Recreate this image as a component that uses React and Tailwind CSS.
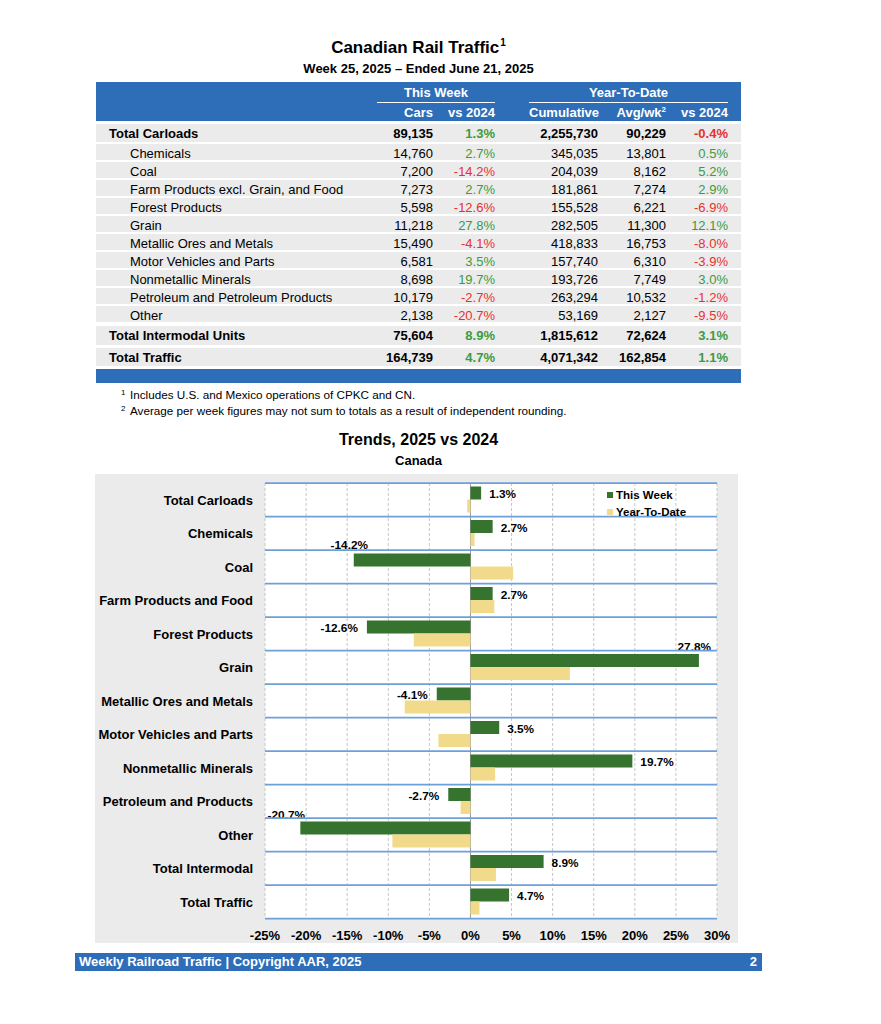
import React from "react";

const COLS = "grid grid-cols-[281px_56px_62px_34px_69px_68px_62px_13px]";

const rows = [
  { label: "Chemicals", cars: "14,760", vs: "2.7%", cum: "345,035", avg: "13,801", ytd: "0.5%" },
  { label: "Coal", cars: "7,200", vs: "-14.2%", cum: "204,039", avg: "8,162", ytd: "5.2%" },
  { label: "Farm Products excl. Grain, and Food", cars: "7,273", vs: "2.7%", cum: "181,861", avg: "7,274", ytd: "2.9%" },
  { label: "Forest Products", cars: "5,598", vs: "-12.6%", cum: "155,528", avg: "6,221", ytd: "-6.9%" },
  { label: "Grain", cars: "11,218", vs: "27.8%", cum: "282,505", avg: "11,300", ytd: "12.1%" },
  { label: "Metallic Ores and Metals", cars: "15,490", vs: "-4.1%", cum: "418,833", avg: "16,753", ytd: "-8.0%" },
  { label: "Motor Vehicles and Parts", cars: "6,581", vs: "3.5%", cum: "157,740", avg: "6,310", ytd: "-3.9%" },
  { label: "Nonmetallic Minerals", cars: "8,698", vs: "19.7%", cum: "193,726", avg: "7,749", ytd: "3.0%" },
  { label: "Petroleum and Petroleum Products", cars: "10,179", vs: "-2.7%", cum: "263,294", avg: "10,532", ytd: "-1.2%" },
  { label: "Other", cars: "2,138", vs: "-20.7%", cum: "53,169", avg: "2,127", ytd: "-9.5%" },
];

function Pct({ v, bold }) {
  const neg = v.startsWith("-");
  return (
    <div className={`text-right ${neg ? "text-[#e8302e]" : "text-[#3d9b3d]"} ${bold ? "font-bold" : ""}`}>{v}</div>
  );
}

function Row({ r, bold, cls }) {
  return (
    <div className={`${COLS} items-center bg-[#ebebeb] text-[13px] text-black ${bold ? "font-bold" : ""} ${cls}`}>
      <div className={bold ? "pl-[13px]" : "pl-[34px]"}>{r.label}</div>
      <div className="text-right">{r.cars}</div>
      <Pct v={r.vs} bold={bold} />
      <div />
      <div className="text-right">{r.cum}</div>
      <div className="text-right">{r.avg}</div>
      <Pct v={r.ytd} bold={bold} />
      <div />
    </div>
  );
}

const L = 170, R = 622, T = 9, RH = 33.5;
const sx = (v) => L + ((v + 25) * (R - L)) / 55;

const cats = [
  { n: "Total Carloads", w: 1.3, y: -0.4 },
  { n: "Chemicals", w: 2.7, y: 0.5 },
  { n: "Coal", w: -14.2, y: 5.2, lx: 273, ly: 71, anchor: "end" },
  { n: "Farm Products and Food", w: 2.7, y: 2.9 },
  { n: "Forest Products", w: -12.6, y: -6.9 },
  { n: "Grain", w: 27.8, y: 12.1, lx: 616, ly: 173, anchor: "end" },
  { n: "Metallic Ores and Metals", w: -4.1, y: -8.0 },
  { n: "Motor Vehicles and Parts", w: 3.5, y: -3.9 },
  { n: "Nonmetallic Minerals", w: 19.7, y: 3.0 },
  { n: "Petroleum and Products", w: -2.7, y: -1.2 },
  { n: "Other", w: -20.7, y: -9.5, lx: 210, ly: 341, anchor: "end" },
  { n: "Total Intermodal", w: 8.9, y: 3.1 },
  { n: "Total Traffic", w: 4.7, y: 1.1 },
];

const ticks = [-25, -20, -15, -10, -5, 0, 5, 10, 15, 20, 25, 30];

function Chart() {
  const z = sx(0);
  const bottom = T + 13 * RH;
  return (
    <svg width="643" height="469" viewBox="0 0 643 469" className="block">
      <rect x={L} y={T} width={R - L} height={13 * RH} fill="#ffffff" />
      {ticks.filter((t) => t !== 0).map((t) => (
        <line key={t} x1={sx(t)} x2={sx(t)} y1={T} y2={bottom} stroke="#c6c6c6" strokeWidth="1" strokeDasharray="3 2" />
      ))}
      <line x1={z} x2={z} y1={T} y2={bottom} stroke="#9c9c9c" strokeWidth="1" />
      {cats.map((c, i) => {
        const top = T + i * RH;
        const gy = top + 3.5;
        const yy = top + 16.5;
        const gx = c.w >= 0 ? z : sx(c.w);
        const gw = Math.abs(sx(c.w) - z);
        const yx = c.y >= 0 ? z : sx(c.y);
        const yw = Math.abs(sx(c.y) - z);
        let lx, ly, anchor;
        if (c.lx) {
          lx = c.lx; ly = c.ly; anchor = c.anchor;
        } else if (c.w >= 0) {
          lx = sx(c.w) + 8; ly = gy + 7.5; anchor = "start";
        } else {
          lx = sx(c.w) - 9; ly = gy + 7.5; anchor = "end";
        }
        return (
          <g key={c.n}>
            <rect x={gx} y={gy} width={gw} height={13} fill="#35732f" />
            <rect x={yx} y={yy} width={yw} height={13} fill="#f1db8b" />
            <text x="158" y={top + RH / 2 + 0.5} textAnchor="end" dominantBaseline="central" fontSize="13" fontWeight="700" fill="#000">{c.n}</text>
            <text x={lx} y={ly} textAnchor={anchor} dominantBaseline="central" fontSize="11.8" fontWeight="700" fill="#000">{`${c.w.toFixed(1)}%`}</text>
          </g>
        );
      })}
      {Array.from({ length: 14 }).map((_, i) => (
        <line key={i} x1={L} x2={R} y1={T + i * RH} y2={T + i * RH} stroke="#6d9fd9" strokeWidth="1.75" />
      ))}
      {ticks.map((t) => (
        <text key={t} x={sx(t)} y="461" textAnchor="middle" dominantBaseline="central" fontSize="13" fontWeight="700" fill="#000">{`${t}%`}</text>
      ))}
      <rect x="512" y="18" width="6" height="6" fill="#35732f" />
      <text x="521" y="21" dominantBaseline="central" fontSize="11.5" fontWeight="700" fill="#000">This Week</text>
      <rect x="512" y="35" width="6" height="6" fill="#f1db8b" />
      <text x="521" y="38" dominantBaseline="central" fontSize="11.5" fontWeight="700" fill="#000">Year-To-Date</text>
    </svg>
  );
}

export default function App() {
  return (
    <div className="w-[881px] h-[1024px] bg-white font-['Liberation_Sans',Arial,sans-serif] text-black overflow-hidden">
      <div className="ml-[96px] w-[645px]">
        <div className="pt-[38px] h-[58px] text-center text-[17px] leading-[20px] font-bold">
          Canadian Rail Traffic<sup className="text-[10px] -top-[7px] ml-[1px]">1</sup>
        </div>
        <div className="mt-[3px] text-center text-[13px] leading-[16px] font-bold">Week 25, 2025 – Ended June 21, 2025</div>

        <div className="mt-[5px] h-[39px] bg-[#2e6db8] pt-[2px] text-white font-bold text-[13px]">
          <div className={`${COLS} h-[19px]`}>
            <div />
            <div className="col-span-2 border-b-[1.5px] border-white text-center leading-[18px]">This Week</div>
            <div />
            <div className="col-span-3 border-b-[1.5px] border-white text-center leading-[18px]">Year-To-Date</div>
            <div />
          </div>
          <div className={`${COLS} h-[18px] leading-[20px]`}>
            <div />
            <div className="text-right">Cars</div>
            <div className="text-right">vs 2024</div>
            <div />
            <div className="text-right">Cumulative</div>
            <div className="text-right">Avg/wk<sup className="text-[8px] -top-[5px]">2</sup></div>
            <div className="text-right">vs 2024</div>
            <div />
          </div>
        </div>

        <Row bold cls="mt-[3px] h-[18px]" r={{ label: "Total Carloads", cars: "89,135", vs: "1.3%", cum: "2,255,730", avg: "90,229", ytd: "-0.4%" }} />
        {rows.map((r) => (
          <Row key={r.label} r={r} cls="mt-[2px] h-[16px]" />
        ))}
        <Row bold cls="mt-[4px] h-[19px]" r={{ label: "Total Intermodal Units", cars: "75,604", vs: "8.9%", cum: "1,815,612", avg: "72,624", ytd: "3.1%" }} />
        <Row bold cls="mt-[3px] h-[18px]" r={{ label: "Total Traffic", cars: "164,739", vs: "4.7%", cum: "4,071,342", avg: "162,854", ytd: "1.1%" }} />
        <div className="mt-[3px] h-[14px] bg-[#2e6db8]" />

        <div className="mt-[4px] ml-[25px] text-[11.7px] leading-[16px]">
          <div className="flex"><span className="w-[9px] text-[8px] leading-[12px]">1</span><span>Includes U.S. and Mexico operations of CPKC and CN.</span></div>
          <div className="flex"><span className="w-[9px] text-[8px] leading-[12px]">2</span><span>Average per week figures may not sum to totals as a result of independent rounding.</span></div>
        </div>

        <div className="mt-[11px] text-center text-[16px] leading-[20px] font-bold">Trends, 2025 vs 2024</div>
        <div className="mt-[3px] text-center text-[13px] leading-[16px] font-bold">Canada</div>
      </div>

      <div className="mt-[5px] ml-[95px] w-[643px] h-[469px] bg-[#ebebeb]">
        <Chart />
      </div>

      <div className="mt-[10px] ml-[75px] w-[687px] h-[18px] bg-[#2e6db8] text-white font-bold text-[13px] leading-[18px] flex justify-between pl-[4px] pr-[5px]">
        <span>Weekly Railroad Traffic | Copyright AAR, 2025</span>
        <span>2</span>
      </div>
    </div>
  );
}
